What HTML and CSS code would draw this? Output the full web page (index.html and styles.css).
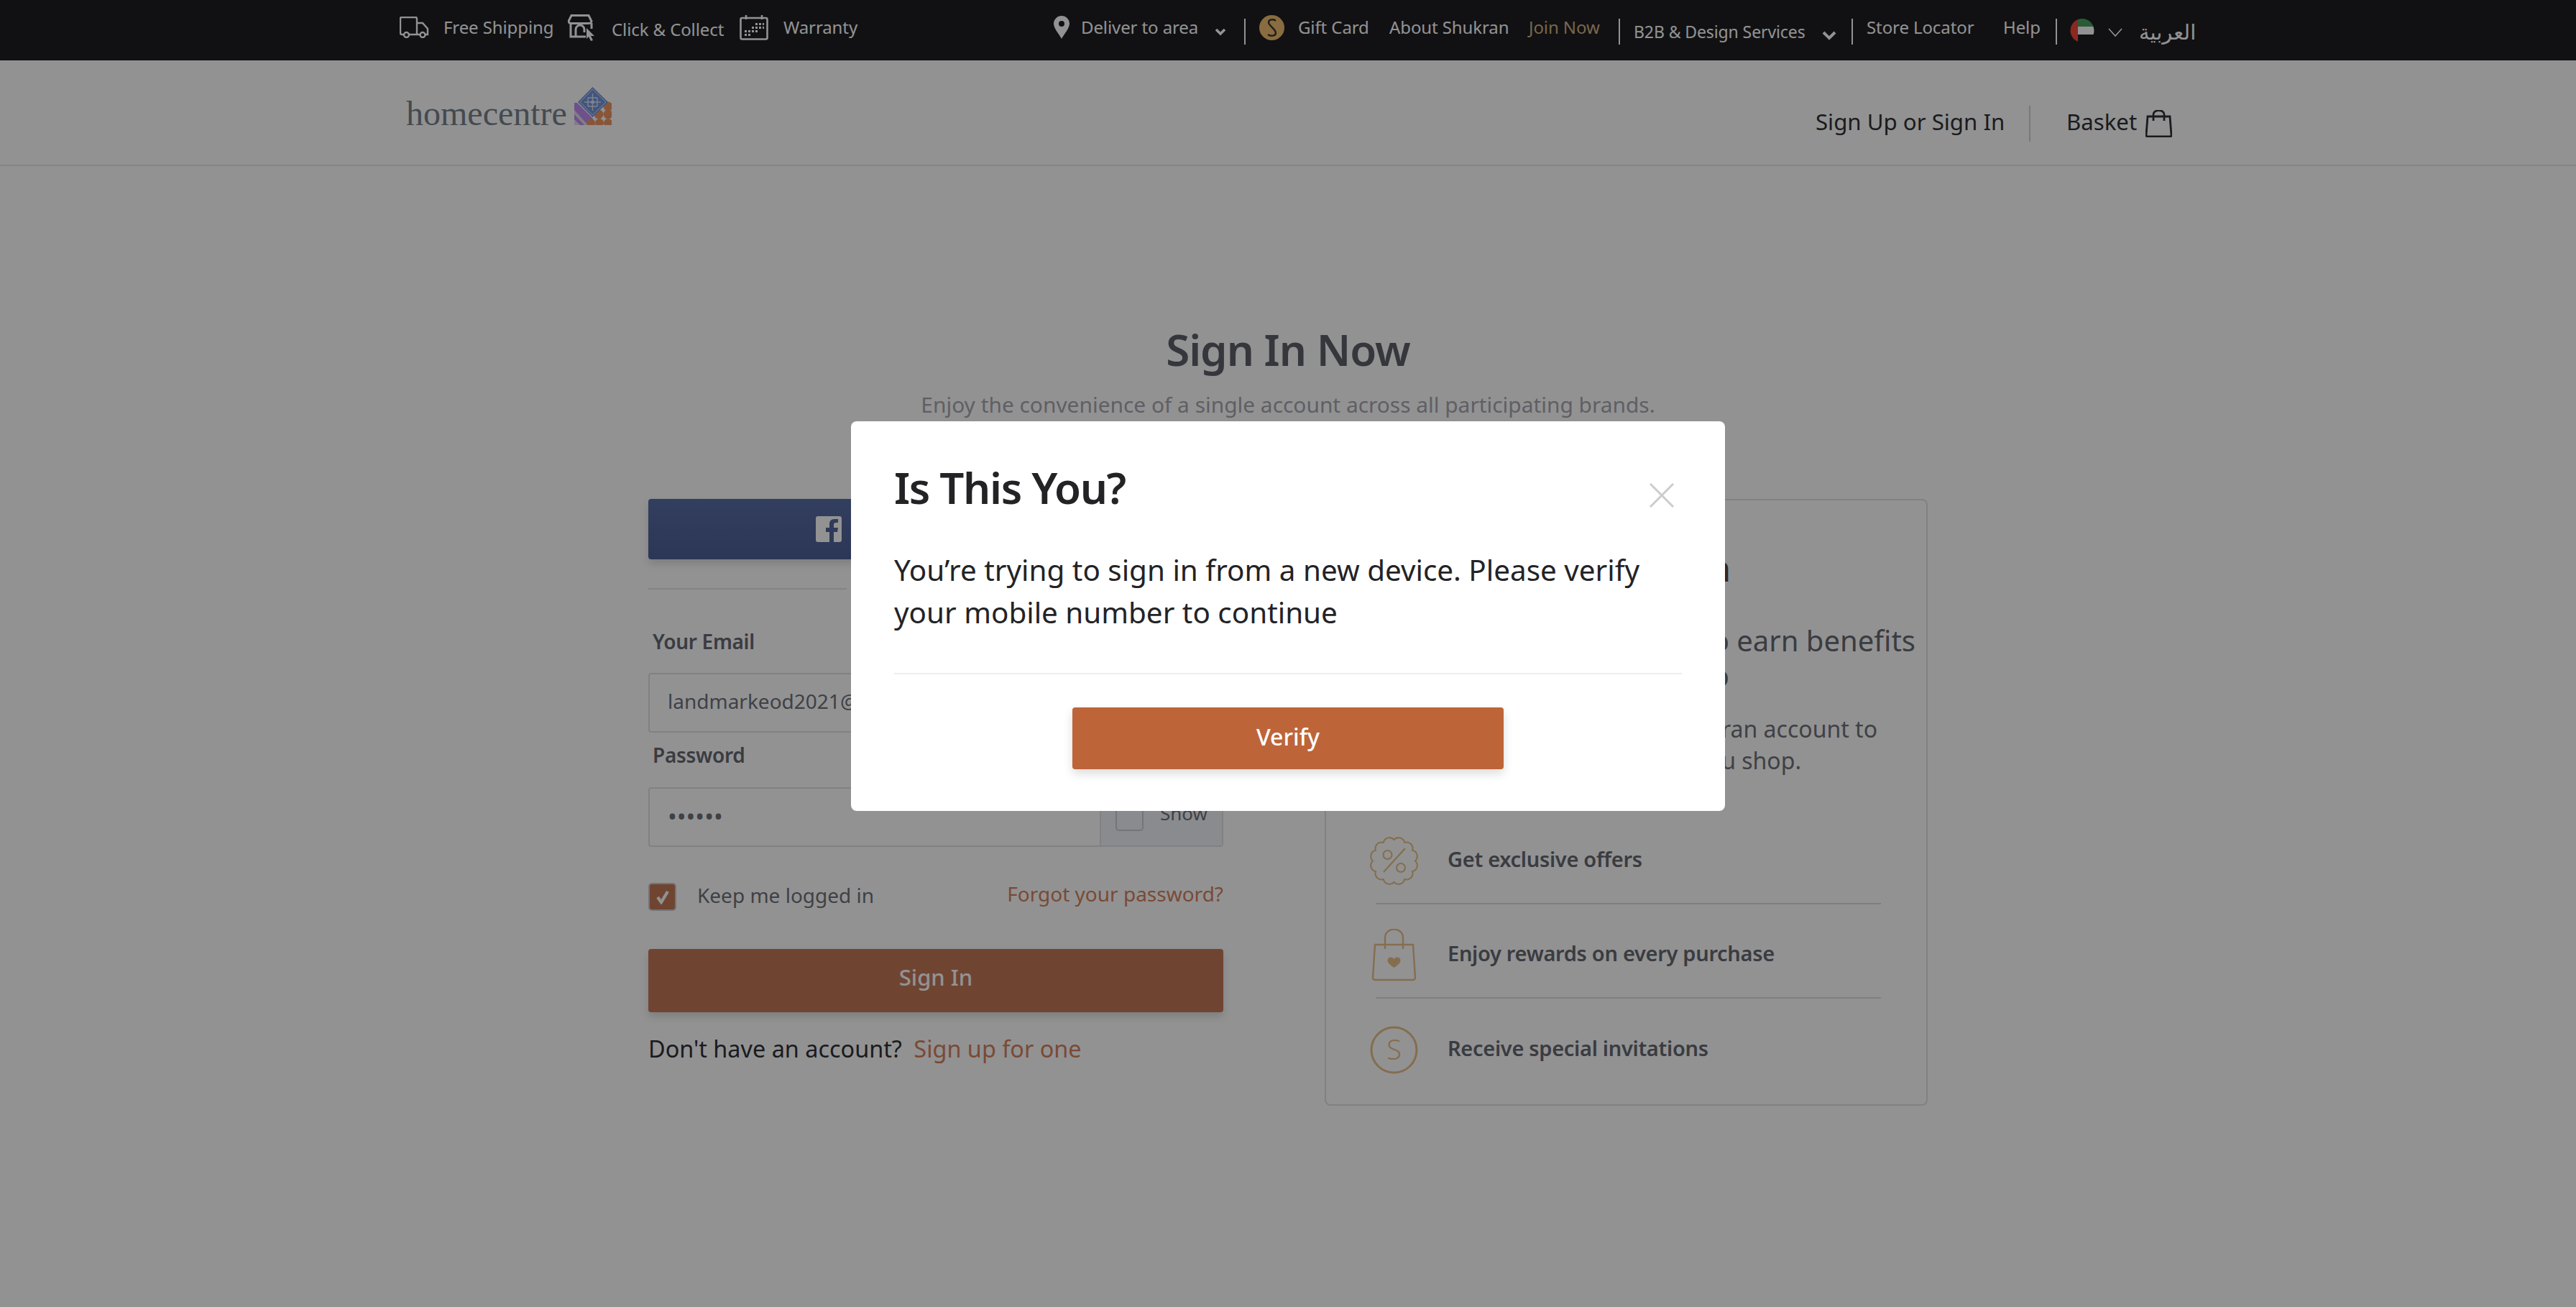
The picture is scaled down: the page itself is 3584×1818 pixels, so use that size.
FILE: index.html
```html
<!DOCTYPE html>
<html lang="en">
<head>
<meta charset="utf-8">
<title>Sign In Now</title>
<link rel="stylesheet" href="styles.css">
</head>
<body>
<div class="topbar">
  <svg class="ic" width="41" height="30" viewBox="0 0 41 30"><path d="M6 25H3a2 2 0 0 1-2-2V3a2 2 0 0 1 2-2h19a2 2 0 0 1 2 2v22H13M24 9h8l7 8v8h-3M24 25h4" fill="none" stroke="#fff" stroke-width="2.4"/><circle cx="9.5" cy="25.5" r="3.5" fill="none" stroke="#fff" stroke-width="2.4"/><circle cx="32" cy="25.5" r="3.5" fill="none" stroke="#fff" stroke-width="2.4"/></svg>
  <span>Free Shipping</span>
  <svg class="ic" width="40" height="37" viewBox="0 0 40 37"><path d="M5 1.500h24l4 8a4 4 0 0 1-4 3H5a4 4 0 0 1-4-3zM4 12v19h21M33 12v8M11 31V21a6 6 0 0 1 12 0v4" fill="none" stroke="#fff" stroke-width="3"/><path d="M26 19v15l3-3 3 6 3-1-3-6h5z" fill="#fff"/></svg>
  <span class="low">Click &amp; Collect</span>
  <svg class="ic" width="40" height="35" viewBox="0 0 40 35"><rect x="1.500" y="4" width="37" height="29.500" rx="2" fill="none" stroke="#fff" stroke-width="2.600"/><path d="M9 0v6M31 0v6" stroke="#fff" stroke-width="2.600"/><path d="M22 11h3v3h-3zM27 11h3v3h-3zM32 11h2v3h-2zM17 16h3v3h-3zM22 16h3v3h-3zM27 16h3v3h-3zM32 16h2v3h-2zM7 21h3v3H7zM12 21h3v3h-3zM17 21h3v3h-3zM22 21h3v3h-3zM7 26h3v3H7zM12 26h3v3h-3z" fill="#fff"/></svg>
  <span>Warranty</span>
  <svg class="ic" width="22" height="32" viewBox="0 0 22 32"><path fill-rule="evenodd" d="M11 0a11 11 0 0 1 11 11c0 6-7 14-11 21C7 25 0 17 0 11A11 11 0 0 1 11 0zm0 7a4 4 0 1 0 0 8 4 4 0 0 0 0-8z" fill="#fff"/></svg>
  <span>Deliver to area</span>
  <svg class="ic chev-bold" width="16" height="11" viewBox="0 0 16 11"><path d="M2 2l6 6 6-6" fill="none" stroke="#fff" stroke-width="3.600"/></svg>
  <i class="sep"></i>
  <svg class="ic" width="35" height="35" viewBox="0 0 35 35"><circle cx="17.500" cy="17.500" r="17.500" fill="#efb964"/><path d="M23 8c-3-3-10-2-10 2 0 5 10 9 10 15 0 4-7 5-11 2" fill="none" stroke="#2a2a2a" stroke-width="2.400"/></svg>
  <span>Gift Card</span>
  <span>About Shukran</span>
  <span class="gold">Join Now</span>
  <i class="sep"></i>
  <span class="lower">B2B &amp; Design Services</span>
  <svg class="ic chev-lower" width="20" height="13" viewBox="0 0 20 13"><path d="M2 2l8 8 8-8" fill="none" stroke="#fff" stroke-width="4"/></svg>
  <i class="sep"></i>
  <span>Store Locator</span>
  <span>Help</span>
  <i class="sep"></i>
  <svg class="ic flag" width="36" height="33" viewBox="0 0 36 33"><clipPath id="fc"><circle cx="18" cy="16.500" r="16.500"/></clipPath><g clip-path="url(#fc)"><rect x="12" y="0" width="24" height="11" fill="#3e9a55"/><rect x="12" y="11" width="24" height="11" fill="#fff"/><rect x="12" y="22" width="24" height="11" fill="#111"/><rect x="0" y="0" width="12" height="33" fill="#f03c2e"/></g></svg>
  <svg class="ic chev-thin" width="20" height="13" viewBox="0 0 20 13"><path d="M1 1l9 10 9-10" fill="none" stroke="#fff" stroke-width="1.600"/></svg>
  <span class="arabic" lang="ar">العربية</span>
</div>

<header class="header">
  <div class="logo">
    <span class="logo-text">homecentre</span>
    <svg width="52" height="53" viewBox="0 0 52 53">
      <defs><clipPath id="lc"><rect width="52" height="53"/></clipPath></defs>
      <g clip-path="url(#lc)">
        <path d="M0 22l30 31H0z" fill="#dcdcea"/>
        <path d="M0 22h4l22 22-5 9h-2L0 32zM0 38l14 15H8L0 45z" fill="#bc86ee"/>
        <circle cx="47" cy="27" r="6.500" fill="#ef8f58"/><circle cx="34" cy="38" r="6.500" fill="#ef8f58"/><circle cx="47" cy="38" r="6.500" fill="#ef8f58"/><circle cx="23" cy="50" r="6" fill="#ef8f58"/><circle cx="35" cy="50" r="6" fill="#ef8f58"/><circle cx="47" cy="50" r="6" fill="#ef8f58"/>
        <path d="M25.500 0L47 21 25.500 42 5 21z" fill="#6b8fd6"/>
        <path d="M25.500 3L44 21 25.500 39 8 21z" fill="none" stroke="#d8e3f6" stroke-width="1"/>
        <path d="M25.500 9v24M14 21h23M19 15h13M19 27h13M19 15v12M32 15v12" fill="none" stroke="#d8e3f6" stroke-width="1.400"/>
        <circle cx="25.500" cy="21" r="2.500" fill="#d8e3f6"/>
      </g>
    </svg>
  </div>
  <div class="account">
    <span class="account-text">Sign Up or Sign In</span>
    <i class="account-sep"></i>
    <span class="account-text">Basket</span>
    <svg width="37" height="38" viewBox="0 0 37 38"><path d="M3 9h31l2 26a2 2 0 0 1-2 2H3a2 2 0 0 1-2-2zM11 15V6a7 5 0 0 1 15 0v9" fill="none" stroke="#232327" stroke-width="2.800"/></svg>
  </div>
</header>

<main class="main">
  <h1 class="title">Sign In Now</h1>
  <p class="subtitle">Enjoy the convenience of a single account across all participating brands.</p>
  <div class="columns">
    <section class="form">
      <div class="fb">
        <svg width="36" height="36" viewBox="0 0 36 36"><path fill-rule="evenodd" d="M3 0h30a3 3 0 0 1 3 3v30a3 3 0 0 1-3 3h-8V22h5l1-6h-6v-4c0-2 1-3 3-3h3V4h-5c-5 0-7 3-7 7v5h-5v6h5v14H3a3 3 0 0 1-3-3V3a3 3 0 0 1 3-3z" fill="#fff"/></svg>
      </div>
      <div class="or"><i></i><i></i></div>
      <div class="label label-first">Your Email</div>
      <div class="field"><div class="field-value">landmarkeod2021@</div></div>
      <div class="label label-second">Password</div>
      <div class="field">
        <div class="field-value dots">••••••</div>
        <div class="show"><i class="box"></i><span class="show-text">Show</span></div>
      </div>
      <div class="options">
        <div class="keep">
          <span class="checked"><svg width="22" height="20" viewBox="0 0 22 20"><path d="M4 10l5 7L18 2" fill="none" stroke="#fff" stroke-width="4.200"/></svg></span>
          <span class="keep-text">Keep me logged in</span>
        </div>
        <span class="forgot">Forgot your password?</span>
      </div>
      <div class="signin">Sign In</div>
      <p class="signup">Don't have an account? <span class="signup-link">Sign up for one</span></p>
    </section>

    <aside class="panel">
      <h2 class="panel-title">Shukran</h2>
      <p class="intro intro-a">to earn benefits</p>
      <p class="intro intro-b">to</p>
      <p class="para para-a">your Shukran account to</p>
      <p class="para para-b">as you shop.</p>
      <ul class="perks">
        <li class="perk">
          <svg class="perk-icon" width="73" height="73" viewBox="0 0 73 73"><path d="M67.500 36.500A9 9 0 0 0 63.400 21 9 9 0 0 0 52 9.650 9 9 0 0 0 36.500 5.500 9 9 0 0 0 21 9.650 9 9 0 0 0 9.650 21 9 9 0 0 0 5.500 36.500 9 9 0 0 0 9.650 52 9 9 0 0 0 21 63.350 9 9 0 0 0 36.500 67.500 9 9 0 0 0 52 63.350 9 9 0 0 0 63.350 52 9 9 0 0 0 67.500 36.500z" transform="translate(36.500 36.500) scale(.95) translate(-36.500 -36.500)" fill="none" stroke="#e6bd80" stroke-width="2.200"/><circle cx="27.500" cy="28" r="6" fill="none" stroke="#e6bd80" stroke-width="2.200"/><circle cx="46" cy="46" r="6" fill="none" stroke="#e6bd80" stroke-width="2.200"/><path d="M22 52l30-33" stroke="#e6bd80" stroke-width="2.200"/></svg>
          <span class="perk-text">Get exclusive offers</span>
        </li>
        <li class="perk">
          <svg class="perk-icon" width="73" height="73" viewBox="0 0 73 73"><path d="M10 22h53l3 46a3 3 0 0 1-3 3H10a3 3 0 0 1-3-3zM24 28V12a12 11 0 0 1 25 0v16" fill="none" stroke="#e6bd80" stroke-width="2.400"/><path d="M36.500 54c-6-4-9-7-9-10a4.800 4.800 0 0 1 9-2 4.800 4.800 0 0 1 9 2c0 3-3 6-9 10z" fill="#e6bd80"/></svg>
          <span class="perk-text">Enjoy rewards on every purchase</span>
        </li>
        <li class="perk">
          <svg class="perk-icon" width="73" height="73" viewBox="0 0 73 73"><circle cx="36.500" cy="36.500" r="31.500" fill="none" stroke="#e6bd80" stroke-width="3"/><text class="perk-s" x="36.500" y="50" text-anchor="middle">S</text></svg>
          <span class="perk-text">Receive special invitations</span>
        </li>
      </ul>
    </aside>
  </div>
</main>

<div class="overlay">
  <div class="modal">
    <h2 class="modal-title">Is This You?</h2>
    <svg class="modal-close" width="34" height="34" viewBox="0 0 34 34"><path d="M1 1l32 32M33 1L1 33" stroke="#ccc" stroke-width="3"/></svg>
    <p class="modal-body">You’re trying to sign in from a new device. Please verify your mobile number to continue</p>
    <div class="modal-rule"></div>
    <div class="verify">Verify</div>
  </div>
</div>
</body>
</html>
```
FILE: styles.css
```css
* { box-sizing: border-box; }
html, body { margin: 0; padding: 0; }
body {
  width: 3584px;
  height: 1818px;
  overflow: hidden;
  background: #fff;
  font-family: "Noto Sans", "DejaVu Sans", sans-serif;
  color: #232326;
}
h1, h2, p, ul { margin: 0; padding: 0; font-weight: 400; }
i { display: block; font-style: normal; }

.topbar {
  height: 84px;
  background: #111114;
  padding: 0 0 10px 556px;
  display: grid;
  grid-template-columns: 61px 173px 61px 178px 61px 376px 38px 186px 41px 21px 54px 127px 194px 125px 21px 262px 41px 21px 190px 73px 19px 54px 43px auto;
  align-items: center;
  color: #fff;
  font-size: 24px;
  letter-spacing: -.1px;
  white-space: nowrap;
}
.ic { display: block; margin-top: 2px; }
.low { margin-top: 6px; }
.lower { margin-top: 14px; font-size: 23px; }
.chev-bold { margin-top: 14px; }
.chev-lower { margin-top: 24px; }
.chev-thin { margin-top: 16px; }
.flag { margin-top: 10px; }
.sep { width: 2px; height: 36px; background: #fff; margin-top: 14px; }
.gold { color: #cfb07f; }
.arabic { margin-top: 12px; font-size: 29px; }

.header {
  height: 147px;
  border-bottom: 2px solid #e6e6e6;
  padding: 0 562px 0 565px;
  display: flex;
  justify-content: space-between;
  align-items: center;
}
.logo { display: flex; align-items: baseline; gap: 10px; margin-bottom: 6px; }
.logo-text {
  font-family: "Liberation Serif", serif;
  font-size: 48px;
  line-height: 56px;
  color: #6f7a82;
}
.account {
  margin-top: 30px;
  display: grid;
  grid-template-columns: 297px 52px 110px 37px;
  align-items: center;
  font-size: 31.2px;
  white-space: nowrap;
}
.account-text { margin-bottom: 6px; }
.account-sep { width: 2px; height: 50px; background: #d0d0d0; }

.main { width: 1780px; margin: 0 auto; }
.title {
  margin-top: 215px;
  font-size: 60px;
  line-height: 80px;
  font-weight: 600;
  letter-spacing: -1px;
  text-align: center;
  color: #55585f;
}
.subtitle {
  margin-top: 15px;
  font-size: 29.9px;
  line-height: 44px;
  text-align: center;
  color: #a1a2a6;
}
.columns { margin-top: 109px; display: flex; justify-content: space-between; align-items: flex-start; }

.form { width: 800px; }
.fb {
  height: 84px;
  border-radius: 4px;
  background: linear-gradient(#50669f, #43558d);
  box-shadow: 0 6px 12px rgba(0, 0, 0, .15);
  padding-left: 233px;
  display: flex;
  align-items: center;
}
.or { margin-top: 40px; display: flex; justify-content: space-between; }
.or i { width: 276px; height: 2px; background: #e4e4e4; }
.label { padding-left: 6px; font-size: 28px; line-height: 34px; font-weight: 600; letter-spacing: -.3px; color: #5d6067; }
.label-first { margin-top: 55px; margin-bottom: 27px; }
.label-second { margin-top: 14px; margin-bottom: 28px; }
.field {
  height: 83px;
  border: 2px solid #e0e0e2;
  border-radius: 4px;
  display: flex;
  align-items: center;
  justify-content: space-between;
  color: #666a6f;
  font-size: 28px;
}
.field-value { padding: 0 0 6px 25px; white-space: nowrap; }
.dots { font-size: 34px; padding-bottom: 4px; }
.show {
  width: 170px;
  height: 79px;
  background: #f1f2f5;
  border-left: 2px solid #dfe0e3;
  padding-left: 20px;
  display: flex;
  align-items: center;
  gap: 23px;
  font-size: 26px;
}
.show-text { padding-bottom: 12px; }
.box { width: 39px; height: 39px; border: 2px solid #c8c9cc; border-radius: 5px; }
.options { margin-top: 50px; display: flex; justify-content: space-between; align-items: center; height: 39px; font-size: 28px; color: #666a6f; white-space: nowrap; }
.keep { display: flex; align-items: center; gap: 29px; }
.keep-text { padding-bottom: 6px; }
.checked {
  width: 39px;
  height: 39px;
  border: 2px solid #c8c9cc;
  border-radius: 5px;
  background: #bf714c;
  display: flex;
  align-items: center;
  justify-content: center;
}
.forgot { color: #d27b50; padding-bottom: 10px; }
.signin {
  margin-top: 53px;
  height: 88px;
  padding-bottom: 10px;
  border-radius: 4px;
  background: #bf714c;
  box-shadow: 0 6px 12px rgba(0, 0, 0, .15);
  display: flex;
  align-items: center;
  justify-content: center;
  color: #fff;
  font-size: 31px;
  font-weight: 500;
}
.signup { margin-top: 28px; font-size: 32.4px; line-height: 44px; white-space: nowrap; }
.signup-link { margin-left: 8px; color: #d27b50; }

.panel {
  width: 839px;
  border: 2px solid #dfdfe2;
  border-radius: 8px;
  padding: 74px 0 16px;
}
.panel-title, .intro, .para { text-align: right; white-space: nowrap; }
.panel-title { height: 58px; line-height: 42px; font-size: 48px; font-weight: 600; color: #55362c; padding-right: 272px; }
.intro { font-size: 40px; line-height: 49px; color: #5d6067; }
.intro-a { margin-top: 38px; padding-right: 15px; }
.intro-b { padding-right: 274px; }
.para { font-size: 32px; line-height: 44px; color: #666a6f; }
.para-a { margin-top: 28px; padding-right: 68px; }
.para-b { padding-right: 174px; }
.perks { list-style: none; margin: 47px 63px 0 69px; }
.perk {
  height: 131px;
  padding-top: 12px;
  border-bottom: 2px solid #dcdcdf;
  display: flex;
  align-items: center;
  font-size: 29px;
  font-weight: 600;
  letter-spacing: -.3px;
  color: #5d6067;
}
.perk:last-child { border-bottom: 0; }
.perk-icon { margin-left: -11px; margin-right: 38px; }
.perk-text { padding-bottom: 6px; }
.perk-s { font-family: "Noto Sans", sans-serif; font-size: 38px; font-weight: 300; fill: #e6bd80; }

.overlay {
  position: fixed;
  inset: 0;
  background: rgba(17, 17, 20, .46);
  display: flex;
  justify-content: center;
  align-items: flex-start;
  padding-top: 586px;
}
.modal {
  position: relative;
  width: 1216px;
  height: 542px;
  background: #fff;
  border-radius: 8px;
  padding: 52px 60px 0;
  color: #232326;
}
.modal-title { font-size: 60px; line-height: 80px; font-weight: 600; letter-spacing: -1.350px; }
.modal-close { position: absolute; left: 1111px; top: 86px; }
.modal-body { margin-top: 45px; font-size: 40.400px; line-height: 59px; }
.modal-rule { margin-top: 55px; height: 2px; background: #eee; }
.verify {
  margin: 46px auto 0;
  width: 600px;
  height: 86px;
  padding-bottom: 6px;
  border-radius: 4px;
  background: #bd6539;
  box-shadow: 0 6px 14px rgba(0, 0, 0, .14);
  color: #fff;
  font-size: 32px;
  font-weight: 500;
  display: flex;
  align-items: center;
  justify-content: center;
}
```
